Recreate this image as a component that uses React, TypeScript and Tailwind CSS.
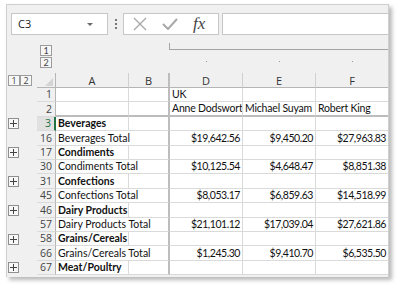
import React from "react";

type Row = {
    n: number;
    kind: "head" | "cat" | "total";
    label?: string;
    vals?: string[];
};

const rows: Row[] = [
    { n: 1, kind: "head", vals: ["UK", "", ""] },
    { n: 2, kind: "head", vals: ["Anne Dodswort", "Michael Suyam", "Robert King"] },
    { n: 3, kind: "cat", label: "Beverages" },
    { n: 16, kind: "total", label: "Beverages Total", vals: ["$19,642.56", "$9,450.20", "$27,963.83"] },
    { n: 17, kind: "cat", label: "Condiments" },
    { n: 30, kind: "total", label: "Condiments Total", vals: ["$10,125.54", "$4,648.47", "$8,851.38"] },
    { n: 31, kind: "cat", label: "Confections" },
    { n: 45, kind: "total", label: "Confections Total", vals: ["$8,053.17", "$6,859.63", "$14,518.99"] },
    { n: 46, kind: "cat", label: "Dairy Products" },
    { n: 57, kind: "total", label: "Dairy Products Total", vals: ["$21,101.12", "$17,039.04", "$27,621.86"] },
    { n: 58, kind: "cat", label: "Grains/Cereals" },
    { n: 66, kind: "total", label: "Grains/Cereals Total", vals: ["$1,245.30", "$9,410.70", "$6,535.50"] },
    { n: 67, kind: "cat", label: "Meat/Poultry" },
];

const cols = "grid grid-cols-[30px_19px_73px_41px_73px_73px_73px]";

function LevelBtn({ label }: { label: string }) {
    return (
        <div className="w-[12px] h-[11px] border border-[#9c9c9c] bg-[#f7f7f7] flex items-center justify-center text-[9px] leading-none text-[#444]">
            {label}
        </div>
    );
}

function PlusBtn() {
    return (
        <div className="w-[11px] h-[11px] border border-[#8f8f8f] bg-[#f7f7f7] flex items-center justify-center">
            <svg width="7" height="7" viewBox="0 0 7 7">
                <path d="M0 3.5H7M3.5 0V7" stroke="#444" strokeWidth="1" />
            </svg>
        </div>
    );
}

export default function App() {
    return (
        <div className="w-[400px] h-[290px] bg-white overflow-hidden font-['Lato',sans-serif]">
            <div className="ml-[6px] mt-[4px] w-[383px] h-[273px] bg-[#f0f0f0] border-l border-t border-r border-[#cfcfcf] shadow-[3px_3px_4px_rgba(0,0,0,0.28)] overflow-hidden flex flex-col">
                {/* Formula bar */}
                <div className="flex items-start h-[31px] pt-[8px] pl-[4px]">
                    <div className="w-[97px] h-[22px] bg-white border border-[#c6c6c6] flex items-center justify-between pl-[6px] pr-[14px] font-['Open_Sans',sans-serif] text-[11px] text-[#222]">
                        <span>C3</span>
                        <svg width="6" height="3" viewBox="0 0 6 3">
                            <path d="M0 0H6L3 3Z" fill="#6b6b6b" />
                        </svg>
                    </div>
                    <div className="w-[15px] h-[22px] flex flex-col items-center justify-center gap-[2px]">
                        <div className="w-[2px] h-[2px] bg-[#777]" />
                        <div className="w-[2px] h-[2px] bg-[#777]" />
                        <div className="w-[2px] h-[2px] bg-[#777]" />
                    </div>
                    <div className="w-[96px] h-[22px] bg-white border border-[#c6c6c6] flex items-center pl-[9px] gap-[15px]">
                        <svg width="14" height="14" viewBox="0 0 14 14">
                            <path d="M1 1L13 13M13 1L1 13" stroke="#a9a9a9" strokeWidth="1.4" />
                        </svg>
                        <svg width="16" height="12" viewBox="0 0 16 12">
                            <path d="M1 6L6 11L15 1" stroke="#a9a9a9" strokeWidth="2" fill="none" />
                        </svg>
                        <span className="font-['Liberation_Serif',serif] italic text-[17px] leading-none text-[#444] -mt-[2px]">
                            fx
                        </span>
                    </div>
                    <div className="ml-[3px] flex-1 h-[22px] bg-white border border-[#c6c6c6] border-r-0" />
                </div>

                {/* Column outline area */}
                <div className={`${cols} h-[37px]`}>
                    <div />
                    <div className="flex flex-col gap-[1px] pl-[3px] pt-[9px]">
                        <LevelBtn label="1" />
                        <LevelBtn label="2" />
                    </div>
                    <div />
                    <div />
                    <div className="col-span-3 relative">
                        <div className="absolute left-[-1px] top-[7px] right-0 h-[7px] border-l border-b border-[#a3a3a3]" />
                        <div className="grid grid-cols-[73px_73px_73px] pt-[25px]">
                            <div className="flex justify-center"><div className="w-[1px] h-[1px] bg-[#999]" /></div>
                            <div className="flex justify-center"><div className="w-[1px] h-[1px] bg-[#999]" /></div>
                            <div className="flex justify-center"><div className="w-[1px] h-[1px] bg-[#999]" /></div>
                        </div>
                    </div>
                </div>

                {/* Column headers */}
                <div className={`${cols} h-[15px] text-[11px] text-[#333] font-['Open_Sans',sans-serif]`}>
                    <div className="flex items-center pl-[1px]">
                        <LevelBtn label="1" />
                        <LevelBtn label="2" />
                    </div>
                    <div className="bg-[#f0f0f0] border-r border-b border-[#b5b5b5] flex items-end justify-end pr-[2px] pb-[1px]">
                        <svg width="8" height="8" viewBox="0 0 8 8">
                            <path d="M8 0V8H0Z" fill="#d4d4d4" />
                        </svg>
                    </div>
                    <div className="border-r border-b border-[#d0d0d0] border-b-[#b5b5b5] flex items-center justify-center leading-none">A</div>
                    <div className="border-r-2 border-b border-[#bdbdbd] border-b-[#b5b5b5] flex items-center justify-center leading-none">B</div>
                    <div className="border-r border-b border-[#d0d0d0] border-b-[#b5b5b5] flex items-center justify-center leading-none">D</div>
                    <div className="border-r border-b border-[#d0d0d0] border-b-[#b5b5b5] flex items-center justify-center leading-none">E</div>
                    <div className="border-r border-b border-[#d0d0d0] border-b-[#b5b5b5] flex items-center justify-center leading-none">F</div>
                </div>

                {/* Rows */}
                {rows.map((r) => {
                    const active = r.n === 3;
                    const bottom = r.n === 2 ? "border-b-2 border-b-[#bcbcbc]" : "border-b border-b-[#dadada]";
                    return (
                        <div key={r.n} className={`${cols} h-[14.4px] text-[10.5px] leading-none text-[#111]`}>
                            <div className="flex items-center pl-[1px]">
                                {r.kind === "cat" && <PlusBtn />}
                            </div>
                            <div
                                className={`border-b border-[#dadada] flex items-center justify-end pr-[3px] font-['Open_Sans',sans-serif] text-[10.5px] ${
                                    active
                                        ? "bg-[#e1e1e1] text-[#217346] border-r-2 border-r-[#217346]"
                                        : "bg-[#f0f0f0] text-[#444] border-r border-r-[#b5b5b5]"
                                }`}
                            >
                                {r.n}
                            </div>
                            {r.kind === "total" ? (
                                <div className={`col-span-2 bg-white border-r-2 border-r-[#bdbdbd] ${bottom} flex items-center pl-[2px] whitespace-nowrap overflow-hidden`}>
                                    {r.label}
                                </div>
                            ) : (
                                <>
                                    <div className={`bg-white border-r border-r-[#dadada] ${bottom} flex items-center pl-[2px] whitespace-nowrap overflow-hidden ${r.kind === "cat" ? "font-bold" : ""}`}>
                                        {r.label}
                                    </div>
                                    <div className={`bg-white border-r-2 border-r-[#bdbdbd] ${bottom}`} />
                                </>
                            )}
                            {[0, 1, 2].map((i) => (
                                <div
                                    key={i}
                                    className={`bg-white border-r border-r-[#dadada] ${bottom} flex items-center whitespace-nowrap overflow-hidden ${
                                        r.kind === "head" ? "pl-[2px] tracking-[-0.2px]" : "justify-end pr-[2px] tracking-[-0.45px]"
                                    }`}
                                >
                                    {r.vals ? r.vals[i] : ""}
                                </div>
                            ))}
                        </div>
                    );
                })}
            </div>
        </div>
    );
}
